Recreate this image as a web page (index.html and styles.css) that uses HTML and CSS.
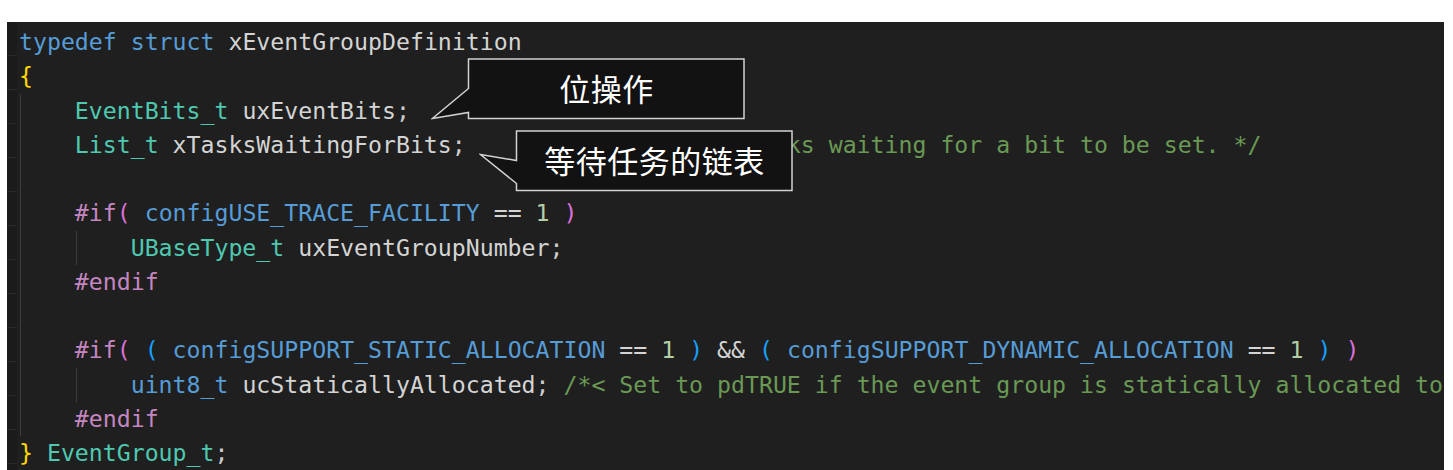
FILE: index.html
```html
<!DOCTYPE html>
<html lang="zh">
<head>
<meta charset="utf-8">
<title>EventGroup_t</title>
<link rel="stylesheet" href="styles.css">
</head>
<body>
<div class="editor">
  <div class="gutter"></div>
  <div class="code">
    <div class="line"><span class="kw">typedef</span> <span class="kw">struct</span> <span class="id">xEventGroupDefinition</span></div>
    <div class="line"><span class="br1">{</span></div>
    <div class="block">
      <div class="line">    <span class="ty">EventBits_t</span> <span class="id">uxEventBits</span>;</div>
      <div class="line">    <span class="ty">List_t</span> <span class="id">xTasksWaitingForBits</span>;        <span class="cm">/*&lt; List of tasks waiting for a bit to be set. */</span></div>
      <div class="line"> </div>
      <div class="line">    <span class="pp">#if</span><span class="br2">(</span> <span class="mc">configUSE_TRACE_FACILITY</span> <span class="op">==</span> <span class="nu">1</span> <span class="br2">)</span></div>
      <div class="line guide2">        <span class="ty">UBaseType_t</span> <span class="id">uxEventGroupNumber</span>;</div>
      <div class="line">    <span class="pp">#endif</span></div>
      <div class="line"> </div>
      <div class="line">    <span class="pp">#if</span><span class="br2">(</span> <span class="br3">(</span> <span class="mc">configSUPPORT_STATIC_ALLOCATION</span> <span class="op">==</span> <span class="nu">1</span> <span class="br3">)</span> <span class="op">&amp;&amp;</span> <span class="br3">(</span> <span class="mc">configSUPPORT_DYNAMIC_ALLOCATION</span> <span class="op">==</span> <span class="nu">1</span> <span class="br3">)</span> <span class="br2">)</span></div>
      <div class="line guide2">        <span class="kw">uint8_t</span> <span class="id">ucStaticallyAllocated</span>; <span class="cm">/*&lt; Set to pdTRUE if the event group is statically allocated to</span></div>
      <div class="line">    <span class="pp">#endif</span></div>
    </div>
    <div class="line"><span class="br1">}</span> <span class="ty">EventGroup_t</span>;</div>
  </div>

  <div class="callout callout-bits">
    <svg class="callout-shape" width="314" height="62" viewBox="-0.5 -0.5 314 62">
      <path d="M37,0.5 H312.5 V60 H37 V54 L1,60 L37,30 Z"/>
    </svg>
    <span class="callout-text">位操作</span>
  </div>

  <div class="callout callout-list">
    <svg class="callout-shape" width="314" height="62" viewBox="-0.5 -0.5 314 62">
      <path d="M37,0.5 H312.5 V60 H37 V53 L1,24 L37,30 Z"/>
    </svg>
    <span class="callout-text">等待任务的链表</span>
  </div>
</div>
</body>
</html>
```

FILE: styles.css
```css
* {
  box-sizing: border-box;
}

html, body {
  margin: 0;
  padding: 0;
  background: #ffffff;
  height: 470px;
  overflow: hidden;
}

.editor {
  position: relative;
  display: flex;
  margin: 22px 0 0 7px;
  width: 1437px;
  height: 448px;
  background: #1f1f1f;
  overflow: hidden;
}

.gutter {
  flex: 0 0 10px;
  background:
    repeating-linear-gradient(to bottom, transparent 0, transparent 33px, #2a2a2a 33px, #2a2a2a 34px),
    #1b1b1b;
}

.code {
  flex: 1 1 auto;
  padding: 3px 0 0 2px;
  font-family: "DejaVu Sans Mono", "Liberation Mono", monospace;
  font-size: 23.2px;
  line-height: 34.25px;
  color: #cccccc;
}

.line {
  height: 34.25px;
  white-space: pre;
}

.block {
  background: linear-gradient(#3c3c3c, #3c3c3c) 1px 0 / 1px 100% no-repeat;
}

.guide2 {
  background: linear-gradient(#3c3c3c, #3c3c3c) calc(4ch + 1px) 0 / 1px 100% no-repeat;
}

.kw { color: #569cd6; }
.id { color: #d4d4d4; }
.ty { color: #4ec9b0; }
.pp { color: #c586c0; }
.mc { color: #569cd6; }
.nu { color: #b5cea8; }
.op { color: #d4d4d4; }
.cm { color: #6a9955; }
.br1 { color: #ffd700; }
.br2 { color: #da70d6; }
.br3 { color: #179fff; }

.callout {
  position: absolute;
  width: 314px;
  height: 62px;
}

.callout-bits {
  left: 424px;
  top: 36px;
}

.callout-list {
  left: 472px;
  top: 108px;
}

.callout-shape {
  position: absolute;
  left: 0;
  top: 0;
}

.callout-shape path {
  fill: #121212;
  stroke: #d2d2d2;
  stroke-width: 1.5;
  stroke-linejoin: miter;
}

.callout-text {
  position: absolute;
  left: 37px;
  right: 0;
  top: 0;
  height: 58px;
  display: flex;
  align-items: center;
  justify-content: center;
  font-family: "Noto Sans CJK SC", "Noto Sans", sans-serif;
  font-size: 31px;
  font-weight: 400;
  color: #ffffff;
  letter-spacing: 0.5px;
}
```
